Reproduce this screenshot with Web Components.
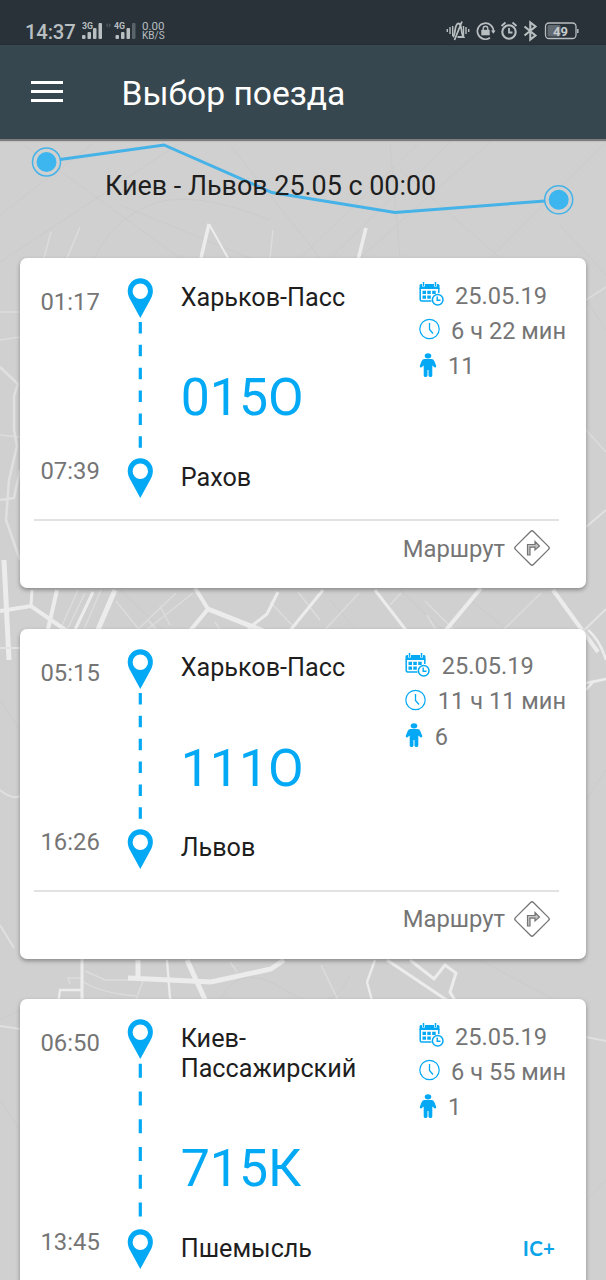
<!DOCTYPE html>
<html lang="ru">
<head>
<meta charset="utf-8">
<title>Выбор поезда</title>
<style>
  html, body {
    margin: 0;
    height: 100%;
    overflow: hidden;
  }
  body {
    font-family: Roboto, "Noto Sans", sans-serif;
    background: #d0d0d0;
  }
</style>
</head>
<body>
<train-app>
  <status-bar slot="top" time="14:37" battery="49"></status-bar>
  <app-bar slot="top">Выбор поезда</app-bar>
  <route-header>Киев - Львов 25.05 с 00:00</route-header>
  <train-card departure="01:17" arrival="07:39" from="Харьков-Пасс" to="Рахов" number="015О" date="25.05.19" duration="6 ч 22 мин" seats="11" action="Маршрут"></train-card>
  <train-card departure="05:15" arrival="16:26" from="Харьков-Пасс" to="Львов" number="111О" date="25.05.19" duration="11 ч 11 мин" seats="6" action="Маршрут"></train-card>
  <train-card departure="06:50" arrival="13:45" from="Киев-Пассажирский" to="Пшемысль" number="715К" date="25.05.19" duration="6 ч 55 мин" seats="1" badge="IC+"></train-card>
</train-app>

<script>
class TrainApp extends HTMLElement {
  connectedCallback() {
    this.attachShadow({ mode: 'open' });
    this.shadowRoot.innerHTML = `
      <style>
        :host {
          display: grid;
          width: 606px;
          height: 1280px;
          overflow: hidden;
        }
        city-map, .page {
          grid-area: 1 / 1;
          min-height: 0;
        }
        .page {
          z-index: 1;
        }
        .list {
          display: flex;
          flex-direction: column;
        }
      </style>
      <city-map></city-map>
      <div class="page">
        <slot name="top"></slot>
        <div class="list"><slot></slot></div>
      </div>
    `;
  }
}
customElements.define('train-app', TrainApp);

class CityMap extends HTMLElement {
  connectedCallback() {
    this.attachShadow({ mode: 'open' });
    this.shadowRoot.innerHTML = `
      <style>
        :host { display: block; }
        svg { display: block; filter: blur(0.6px); }
      </style>
      <svg width="606" height="1280" viewBox="0 0 606 1280" fill="none" stroke="#ececec">
        <rect width="606" height="1280" fill="#d0d0d0" stroke="none"/>
        <!-- side streets -->
        <g stroke="#cbcbcb" stroke-width="1">
          <path d="M0 262L180 143M0 215L95 142M20 142L180 258M120 205L250 258M230 145L320 258M300 258L420 142M330 258L450 142M360 258L490 142M400 170L500 258M490 258L606 142M560 225L606 275M390 142L400 258M95 258Q110 222 150 205T270 220"/>
          <path d="M120 590L165 632M330 600L358 632M400 590L445 632M470 600L510 632M0 1020L20 1010M220 1000Q240 960 285 990T350 975M480 960L555 1000M0 700L20 730M0 1100L20 1130M586 300L606 330M586 800L606 770M586 1200L606 1180"/>
        </g>
        <g stroke="#dcdcdc" stroke-width="1.5">
          <path d="M80 227L67 258M51 232L44 258M273 230L270 258"/>
          <path d="M85 593L66 632M78 590L60 630M101 590L82 634M116 601L141 632M176 593L133 634M193 593L139 636M160 606L170 625M148 620L160 634M270 602L292 625M298 592L320 620M215 622L225 638M359 593L321 634M401 593L390 605M425 601L460 636M427 615L441 638M541 593L495 638"/>
          <path d="M85 971L105 980H130M82 981Q100 993 136 996M143 981L135 1002M70 984L68 978H84M112 1006H133M230 962L237 972M321 965L342 1008"/>
          <path d="M0 312H20M0 340L20 337M0 435L20 437M586 300L606 287M586 430L606 452"/>
        </g>
        <!-- main roads -->
        <path stroke-width="3.5" d="M209 224L201 258M366 228L358 260"/>
        <path stroke-width="2" d="M209 224L228 258"/>
        <path stroke="#e0e0e0" stroke-width="2.5" d="M0 367L18 384L14 396V430L17 446L9 480L6 520L20 560M0 500L14 498L20 470"/>
        <path stroke-width="5" d="M4 560L9 660M115 590L97 632M208 609L276 636"/>
        <path stroke-width="4" d="M0 611L31 606L77 638M57 590L46 638M195 588L208 609L184 638M481 588L441 636M553 590L598 652"/>
        <path stroke-width="3" d="M31 606L32 590M93 592L73 634M278 592L267 614L249 628L247 638M323 590L284 638M375 590L412 638"/>
        <path stroke="#e2e2e2" stroke-width="2" d="M606 609L576 638M606 510L586 527M0 648H20"/>
        <path stroke-width="2.5" d="M588 630Q600 640 606 660M586 690L593 682L606 679M586 683L606 679"/>
        <path stroke-width="5" d="M128 978L211 982L271 969L284 960M187 960L207 1004M138 960V978"/>
        <path stroke-width="3" d="M82 958V1004M387 960L460 1009M410 960L434 979L445 965L456 973L450 992L460 1009"/>
        <path stroke-width="2.3" d="M82 990H60L58 1004M167 960L170 998L178 1008M375 960L367 982L374 1008"/>
        <path stroke="#e0e0e0" stroke-width="2" d="M586 1037L606 1041M0 1026L20 1029M0 790Q12 800 20 796M0 925L14 948"/>
      </svg>
    `;
  }
}
customElements.define('city-map', CityMap);

class StatusBar extends HTMLElement {
  connectedCallback() {
    this.attachShadow({ mode: 'open' });
    this.shadowRoot.innerHTML = `
      <style>
        :host {
          display: flex;
          align-items: flex-start;
          justify-content: space-between;
          box-sizing: border-box;
          height: 45px;
          padding: 20px 27px 0 25px;
          background: #283238;
          color: #b9bec1;
        }
        .left, .right {
          display: flex;
        }
        .time {
          font-size: 20.3px;
          font-weight: 500;
          line-height: 24px;
          width: 57px;
          letter-spacing: -0.2px;
        }
        .speed {
          font-size: 11.5px;
          line-height: 9px;
          margin: 2px 0 0 5px;
        }
        .speed div + div {
          font-size: 10px;
        }
        svg { display: block; }
      </style>
      <div class="left">
        <div class="time">${this.getAttribute('time')}</div>
        <svg width="55" height="22" viewBox="82 20 55 22" fill="#b9bec1">
          <text x="82" y="28.5" font-size="8.500" font-weight="700" textLength="11" lengthAdjust="spacingAndGlyphs">3G</text>
          <rect x="82" y="35" width="3.500" height="4" rx="1"/>
          <rect x="87.500" y="32" width="3.500" height="7" rx="1"/>
          <rect x="93" y="28" width="3.500" height="11" rx="1"/>
          <rect x="98.500" y="23" width="3.500" height="16" rx="1"/>
          <path d="M106 25l2-2v5zM111 25l-2-2v5z" fill="#4b555b"/>
          <text x="114" y="28.5" font-size="8.500" font-weight="700" textLength="11" lengthAdjust="spacingAndGlyphs">4G</text>
          <rect x="115.500" y="35" width="3.500" height="4" rx="1"/>
          <rect x="121" y="32" width="3.500" height="7" rx="1"/>
          <rect x="126.500" y="28" width="3.500" height="11" rx="1"/>
          <rect x="132" y="23" width="3.500" height="16" rx="1" fill="#59636a"/>
        </svg>
        <div class="speed"><div>0.00</div><div>KB/S</div></div>
      </div>
      <div class="right">
        <svg width="134" height="22" viewBox="445.500 20 134 22" fill="none" stroke="#b9bec1" stroke-width="1.6">
          <!-- bell off -->
          <path d="M447.800 29v3M450.500 27v7M453.200 26v10M464 26v10M466.500 27v7M469.200 29v3" stroke-width="1.4"/>
          <path d="M453.500 37C456.500 34 454.500 25 458.500 23.500C463 23 461 33 464 37H458M455 40L462.500 21.500" stroke-width="1.8"/>
          <!-- rotation lock -->
          <path d="M490.500 37.800A8 8 0 1 1 493.900 32" stroke-width="1.700"/>
          <path d="M491.500 30.500h4.500l-2.200 3.300z" fill="#b9bec1" stroke="none"/>
          <rect x="481.800" y="29.800" width="8.400" height="5.500" fill="#b9bec1" stroke="none"/>
          <path d="M483.700 30v-1.500a2.300 2.300 0 0 1 4.600 0V30" stroke-width="1.4"/>
          <!-- alarm -->
          <circle cx="509.500" cy="32" r="6.700" stroke-width="2.100"/>
          <path d="M509.500 28v4.500h3.500M502 26l4-3.500M517 26l-4-3.500" stroke-width="1.800"/>
          <!-- bluetooth -->
          <path d="M525 26.500l11 9-5.200 4V22.500l5.200 4-11 9" stroke-width="2.100"/>
          <!-- battery -->
          <rect x="546" y="23" width="30.500" height="15.500" rx="3.500" stroke-width="1.300"/>
          <rect x="548" y="25" width="13" height="11.500" rx="1.500" fill="#626b71" stroke="none"/>
          <path d="M578.300 29v4" stroke-width="1.500"/>
          <text x="553.500" y="35.700" font-size="13" font-weight="700" fill="#c5cacd" stroke="none" textLength="15">${this.getAttribute('battery')}</text>
        </svg>
      </div>
    `;
  }
}
customElements.define('status-bar', StatusBar);

class AppBar extends HTMLElement {
  connectedCallback() {
    this.attachShadow({ mode: 'open' });
    this.shadowRoot.innerHTML = `
      <style>
        :host {
          display: flex;
          align-items: center;
          box-sizing: border-box;
          height: 94px;
          padding-left: 31px;
          background: #37474f;
          box-shadow: 0 1px 1px 1px rgba(0, 0, 0, 0.4);
          color: #fff;
          font-size: 33.6px;
          line-height: 40px;
        }
        .burger {
          display: flex;
          flex-direction: column;
          gap: 6px;
          width: 32px;
          margin: 0 58.5px 2px 0;
        }
        .burger i {
          height: 3px;
          background: #fff;
        }
        .title {
          padding-top: 4px;
        }
      </style>
      <div class="burger"><i></i><i></i><i></i></div>
      <div class="title"><slot></slot></div>
    `;
  }
}
customElements.define('app-bar', AppBar);

class RouteHeader extends HTMLElement {
  connectedCallback() {
    this.attachShadow({ mode: 'open' });
    this.shadowRoot.innerHTML = `
      <style>
        :host {
          display: grid;
          height: 119px;
        }
        svg, .label {
          grid-area: 1 / 1;
        }
        .label {
          padding: 30px 0 0 105px;
          font-size: 26.9px;
          line-height: 34px;
          color: #1e1e1e;
        }
      </style>
      <svg width="606" height="119" viewBox="0 139 606 119" fill="none" stroke="#45b2e8">
        <path d="M60 159.500L164 145L272 192.500L395 212.500L545 201" stroke-width="3"/>
        <circle cx="46.500" cy="162" r="14" stroke-width="1.500"/>
        <circle cx="46.500" cy="162" r="10" fill="#3db5ee" stroke="none"/>
        <circle cx="558.700" cy="199.800" r="14" stroke-width="1.500"/>
        <circle cx="558.700" cy="199.800" r="10" fill="#3db5ee" stroke="none"/>
      </svg>
      <div class="label"><slot></slot></div>
    `;
  }
}
customElements.define('route-header', RouteHeader);

class MapPin extends HTMLElement {
  connectedCallback() {
    this.attachShadow({ mode: 'open' });
    this.shadowRoot.innerHTML = `
      <style>
        :host { display: block; }
        svg { display: block; }
      </style>
      <svg width="26" height="40" viewBox="0 0 26 40">
        <path fill="#03a9f4" fill-rule="evenodd" d="M13.300 0.300A12.600 12.600 0 0 0 0.700 13C0.700 17 2.300 20 4.300 23.500L13.300 40L22.300 23.500C24.300 20 25.900 17 25.900 13A12.600 12.600 0 0 0 13.300 0.300ZM13.300 5.500A7.700 7.700 0 1 1 13.300 20.900A7.700 7.700 0 1 1 13.300 5.500Z"/>
      </svg>
    `;
  }
}
customElements.define('map-pin', MapPin);

class InfoRow extends HTMLElement {
  connectedCallback() {
    const icons = {
      date: `<svg width="25" height="26" viewBox="0 0 25 26">
        <path fill="#03a9f4" d="M0.500 4.500Q0.500 3 2 3H3V5.500H6V3H15V5.500H18V3H19Q20.500 3 20.500 4.500V8H0.500Z"/>
        <path d="M4.500 1V5M16.500 1V5" stroke="#03a9f4" stroke-width="1.500" fill="none"/>
        <path d="M1.200 7V18.500Q1.200 20 2.700 20H12.500M19.800 7V12" stroke="#03a9f4" stroke-width="1.500" fill="none"/>
        <path fill="#03a9f4" d="M3.500 9.700h3.500v3.300H3.500zM8.300 9.700h3.500v3.300H8.300zM13.200 9.700h3.500v3.300h-3.500zM3.500 14.500h3.500v3.300H3.500zM8.300 14.500h3.500v3.300H8.300z"/>
        <circle cx="18.700" cy="18.700" r="5.300" fill="#fff" stroke="#03a9f4" stroke-width="1.500"/>
        <path d="M18.200 15.500V19.300H21.500" stroke="#03a9f4" stroke-width="1.400" fill="none"/>
      </svg>`,
      duration: `<svg width="21" height="22" viewBox="0 0 21 22" fill="none" stroke="#03a9f4">
        <circle cx="10.500" cy="11" r="9.700" stroke-width="1.200"/>
        <path d="M10.500 5V11.500L14 15.500" stroke-width="1.300"/>
      </svg>`,
      seats: `<svg width="18" height="26" viewBox="0 0 18 26" fill="#03a9f4">
        <ellipse cx="9" cy="3.800" rx="3.300" ry="2.600"/>
        <path d="M5.500 7H12.500Q14.500 7 15.300 9L17.300 14Q17.300 15.500 15.800 15.500L13.300 13.500V23.500Q13.300 25 11.500 25Q9.500 25 9.500 23.500V18H8.500V23.500Q8.500 25 6.500 25Q4.700 25 4.700 23.500V13.500L2.200 15.500Q0.700 15.500 0.700 14L2.700 9Q3.500 7 5.500 7Z"/>
      </svg>`
    };
    this.attachShadow({ mode: 'open' });
    this.shadowRoot.innerHTML = `
      <style>
        :host {
          display: flex;
          align-items: center;
          gap: 11.5px;
          height: 35.3px;
          font-size: 23.6px;
          white-space: nowrap;
          color: #757575;
        }
        svg { display: block; flex: none; margin-bottom: 3px; }
      </style>
      ${icons[this.getAttribute('icon')]}
      <span><slot></slot></span>
    `;
  }
}
customElements.define('info-row', InfoRow);

class TrainCard extends HTMLElement {
  connectedCallback() {
    const get = name => this.getAttribute(name) || '';
    this.attachShadow({ mode: 'open' });
    this.shadowRoot.innerHTML = `
      <style>
        :host {
          display: block;
          box-sizing: border-box;
          flex: none;
          margin: 0 20px 40.5px;
          padding: 20px 20px 0;
          background: #fff;
          border-radius: 7px;
          box-shadow: 0 2px 4px rgba(0, 0, 0, 0.35);
        }
        .main {
          display: grid;
          grid-template-columns: 87px 26px 27.7px 1fr auto;
        }
        .times {
          display: flex;
          flex-direction: column;
          justify-content: space-between;
          padding: 10px 0 13px 0.5px;
          font-size: 23.8px;
          line-height: 28px;
          color: #757575;
        }
        .rail {
          display: flex;
          flex-direction: column;
        }
        .rail svg {
          flex: 1;
          width: 26px;
          height: 0;
        }
        .stops {
          grid-column: 4;
          padding: 4.5px 0 5.5px;
          font-size: 25.2px;
          line-height: 30px;
          color: #1e1e1e;
        }
        .number {
          margin: 55.5px 0 34.5px;
          font-size: 51.8px;
          line-height: 60px;
          color: #03a9f4;
        }
        .info {
          display: flex;
          flex-direction: column;
        }
        .badge {
          margin: auto 11px 7px auto;
          font: 700 20.5px/28px Lato, sans-serif;
          letter-spacing: 0.2px;
          color: #0aa5e8;
        }
        .footer {
          display: flex;
          justify-content: flex-end;
          align-items: center;
          gap: 8px;
          height: 69px;
          box-sizing: border-box;
          margin: 21px 7px 0 -6px;
          padding: 0 8px 13px 0;
          border-top: 2px solid #e2e2e2;
          font-size: 23.8px;
          color: #757575;
        }
        .footer span {
          padding-top: 1px;
        }
      </style>
      <div class="main">
        <div class="times"><span>${get('departure')}</span><span>${get('arrival')}</span></div>
        <div class="rail">
          <map-pin></map-pin>
          <svg viewBox="0 0 26 140" preserveAspectRatio="none">
            <path d="M13.300 4V140" stroke="#03a9f4" stroke-width="3.200" stroke-dasharray="11.500 11.350"/>
          </svg>
          <map-pin></map-pin>
        </div>
        <div class="stops">
          <div>${get('from')}</div>
          <div class="number">${get('number')}</div>
          <div>${get('to')}</div>
        </div>
        <div class="info">
          <info-row icon="date">${get('date')}</info-row>
          <info-row icon="duration">${get('duration')}</info-row>
          <info-row icon="seats">${get('seats')}</info-row>
          ${get('badge') ? `<span class="badge">${get('badge')}</span>` : ''}
        </div>
      </div>
      <div class="footer">
        ${get('action') ? `<span>${get('action')}</span>
        <svg width="38" height="38" viewBox="0 0 38 38" fill="none" stroke="#757575" stroke-width="1.300">
          <rect x="6.300" y="6.300" width="25.400" height="25.400" rx="2" transform="rotate(45 19 19)"/>
          <path d="M14.500 26V15.500H22V12.500L26.500 17L22 21V18.200H17V26Z" fill="#c4c4c4" stroke-width="1.200"/>
        </svg>` : ''}
      </div>
    `;
  }
}
customElements.define('train-card', TrainCard);
</script>
</body>
</html>
